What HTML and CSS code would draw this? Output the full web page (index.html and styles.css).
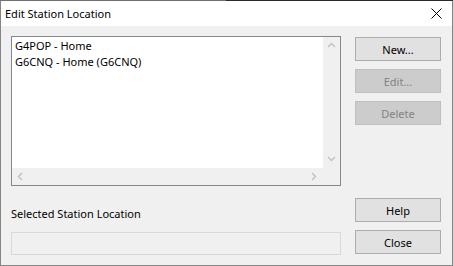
FILE: index.html
```html
<!DOCTYPE html>
<html lang="en">
<head>
  <meta charset="UTF-8">
  <title>Edit Station Location</title>
  <link rel="stylesheet" href="styles.css">
</head>
<body>
  <div class="window">
    <div class="topline"></div>
    <div class="titlebar">
      <span class="title">Edit Station Location</span>
      <svg class="close-x" width="11" height="11" viewBox="0 0 11 11">
        <path d="M0.5 0.5 L10.5 10.5 M10.5 0.5 L0.5 10.5" stroke="#000" stroke-width="1" fill="none"/>
      </svg>
    </div>
    <div class="content">
      <div class="left">
        <div class="listbox">
          <div class="list-main">
            <ul class="items">
              <li>G4POP - Home</li>
              <li>G6CNQ - Home (G6CNQ)</li>
            </ul>
            <div class="vscroll">
              <svg width="17" height="17" viewBox="0 0 17 17"><path d="M5 10 L8.5 6.5 L12 10" stroke="#c2c2c2" stroke-width="1.5" fill="none"/></svg>
              <svg width="17" height="17" viewBox="0 0 17 17"><path d="M5 7 L8.5 10.5 L12 7" stroke="#c2c2c2" stroke-width="1.5" fill="none"/></svg>
            </div>
          </div>
          <div class="hscroll">
            <div class="hbar">
              <svg width="17" height="17" viewBox="0 0 17 17"><path d="M10 5 L6.5 8.5 L10 12" stroke="#c2c2c2" stroke-width="1.5" fill="none"/></svg>
              <svg width="17" height="17" viewBox="0 0 17 17"><path d="M7 5 L10.5 8.5 L7 12" stroke="#c2c2c2" stroke-width="1.5" fill="none"/></svg>
            </div>
            <div class="corner"></div>
          </div>
        </div>
        <div class="label">Selected Station Location</div>
        <div class="field"></div>
      </div>
      <div class="right">
        <button class="btn">New...</button>
        <button class="btn" disabled>Edit...</button>
        <button class="btn" disabled>Delete</button>
        <button class="btn push">Help</button>
        <button class="btn">Close</button>
      </div>
    </div>
  </div>
</body>
</html>
```

FILE: styles.css
```css
body {
  margin: 0;
  background: #f0f0f0;
  font-family: "Noto Sans", "Open Sans", sans-serif;
  font-size: 11px;
  color: #000;
}
.window {
  width: 453px;
  height: 266px;
  box-sizing: border-box;
  border: 1px solid #858585;
  border-top: none;
  background: #f0f0f0;
  display: flex;
  flex-direction: column;
}
.topline {
  height: 1px;
  margin: 0 -1px;
  background: linear-gradient(to right, #707070 226px, #2b2b2b 226px);
}
.titlebar {
  height: 25px;
  background: #fff;
  display: flex;
  align-items: center;
  justify-content: space-between;
  padding: 0 10px 0 4px;
}
.title {
  font-size: 11px;
  line-height: 16px;
  padding-top: 1px;
}
.close-x {
  display: block;
}
.content {
  display: flex;
  gap: 14px;
  padding: 10px 11px 0 10px;
}
.left {
  width: 330px;
  display: flex;
  flex-direction: column;
}
.listbox {
  height: 150px;
  box-sizing: border-box;
  border: 1px solid #828790;
  background: #fff;
  display: flex;
  flex-direction: column;
}
.list-main {
  flex: 1;
  display: flex;
}
.items {
  flex: 1;
  list-style: none;
  margin: 0;
  padding: 1px 3px;
}
.items li {
  line-height: 16px;
  white-space: nowrap;
}
.vscroll {
  width: 17px;
  background: #f0f0f0;
  display: flex;
  flex-direction: column;
  justify-content: space-between;
  padding-bottom: 1px;
}
.vscroll svg, .hbar svg {
  display: block;
}
.hscroll {
  height: 17px;
  display: flex;
  background: #f0f0f0;
}
.hbar {
  flex: 1;
  display: flex;
  justify-content: space-between;
  padding-right: 1px;
}
.corner {
  width: 17px;
}
.label {
  margin-top: 20px;
  line-height: 16px;
}
.field {
  margin-top: 10px;
  height: 23px;
  box-sizing: border-box;
  border: 1px solid #d9d9d9;
  background: #f0f0f0;
}
.right {
  width: 86px;
  padding-top: 1px;
  display: flex;
  flex-direction: column;
  gap: 8px;
}
.btn {
  height: 24px;
  box-sizing: border-box;
  border: 1px solid #adadad;
  background: #e1e1e1;
  font-family: inherit;
  font-size: 11px;
  color: #000;
  padding: 0;
}
.btn:disabled {
  border-color: #bfbfbf;
  background: #cccccc;
  color: #838383;
}
.btn.push {
  margin-top: 65px;
}
```
